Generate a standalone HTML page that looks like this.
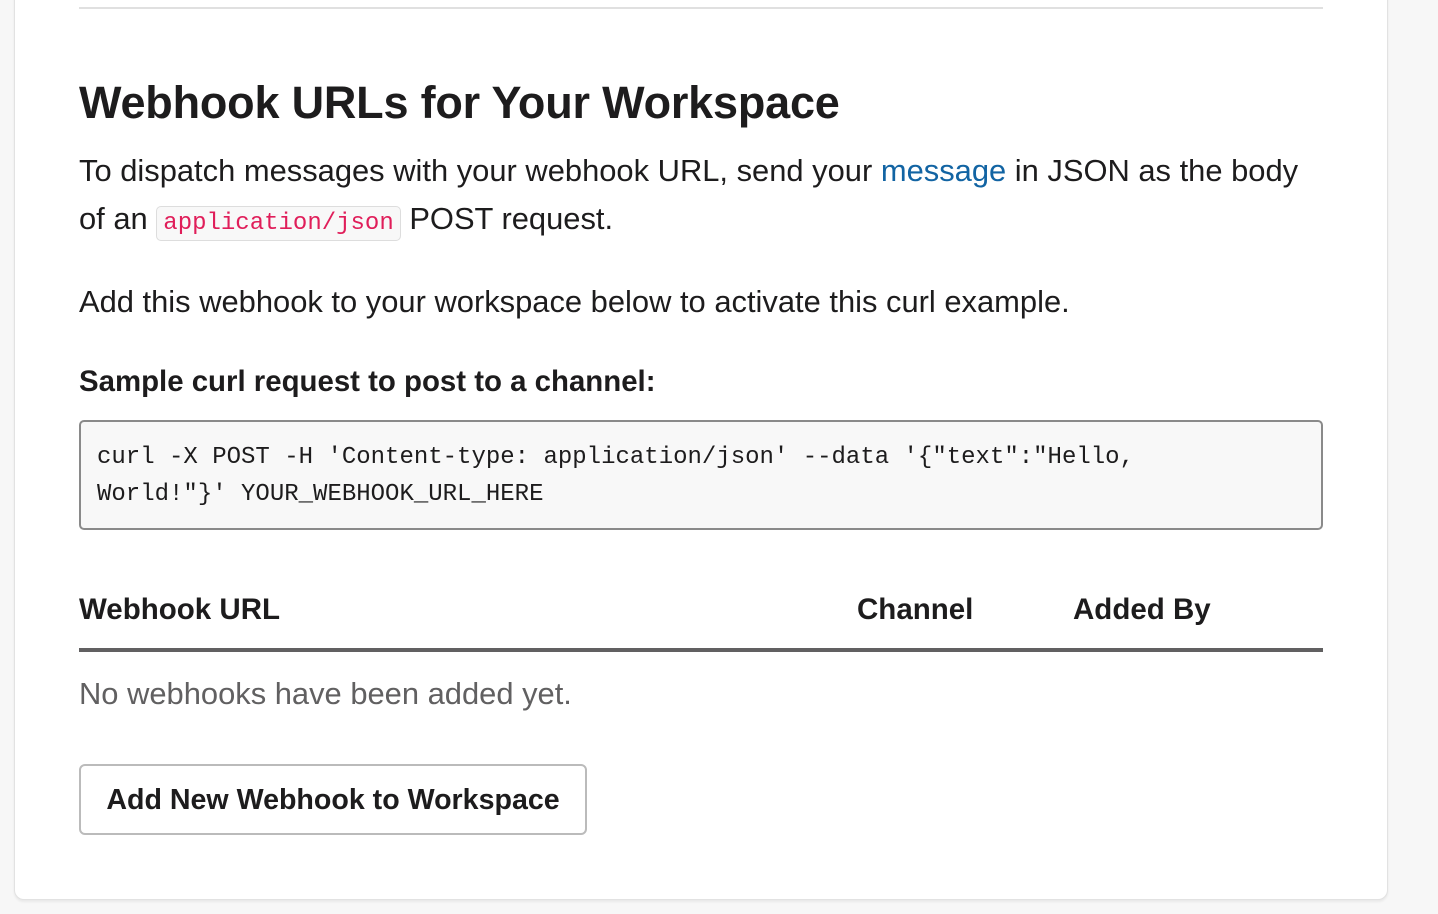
<!DOCTYPE html>
<html><head><meta charset="utf-8"><style>
html,body{margin:0;padding:0;background:#f7f7f7;width:1438px;height:914px;overflow:hidden;font-family:"Liberation Sans",sans-serif;color:#1d1c1d}
.card{position:absolute;left:14px;top:-20px;width:1372px;height:918px;background:#fff;border:1px solid #e2e2e2;border-radius:10px;box-shadow:0 2px 2px rgba(0,0,0,.06)}
.abs{position:absolute;white-space:nowrap}
.hr{left:79px;top:7px;width:1244px;height:2px;background:#e0e0e0}
h1{margin:0;font-size:45px;font-weight:bold;left:79px;top:77px;letter-spacing:-0.2px}
.p{font-size:30.9px;left:79px}
a{color:#1264a3;text-decoration:none}
code{font-family:"Liberation Mono",monospace;font-size:24px;color:#e01e5a;background:#f8f8f8;border:1px solid #ddd;border-radius:5px;padding:3px 6px}
.pre{left:79px;top:420px;width:1240px;height:106px;background:#f8f8f8;border:2px solid #8a8a8a;border-radius:5px;font-family:"Liberation Mono",monospace;font-size:24px;color:#1d1c1d}
.pre div{position:absolute;left:16px}
.th{font-size:29.5px;font-weight:bold;top:593px}
.line{left:79px;top:648px;width:1244px;height:4px;background:#616061}
.btn{left:79px;top:764px;width:504px;height:67px;border:2px solid #bbb;border-radius:6px;font-weight:bold;font-size:28.6px;line-height:69px;text-align:center}
</style></head><body>
<div class="card"></div>
<div class="abs hr"></div>
<h1 class="abs">Webhook URLs for Your Workspace</h1>
<div class="abs p" style="top:153px">To dispatch messages with your webhook URL, send your <a>message</a> in JSON as the body</div>
<div class="abs p" style="top:201px">of an <code>application/json</code> POST request.</div>
<div class="abs p" style="top:284px">Add this webhook to your workspace below to activate this curl example.</div>
<div class="abs p" style="top:365px;font-weight:bold;font-size:29.4px">Sample curl request to post to a channel:</div>
<div class="abs pre">
<div style="top:22px">curl -X POST -H 'Content-type: application/json' --data '{"text":"Hello,</div>
<div style="top:59px">World!"}' YOUR_WEBHOOK_URL_HERE</div>
</div>
<div class="abs th" style="left:79px">Webhook URL</div>
<div class="abs th" style="left:857px">Channel</div>
<div class="abs th" style="left:1073px">Added By</div>
<div class="abs line"></div>
<div class="abs p" style="top:676px;color:#616061">No webhooks have been added yet.</div>
<div class="abs btn">Add New Webhook to Workspace</div>
</body></html>
